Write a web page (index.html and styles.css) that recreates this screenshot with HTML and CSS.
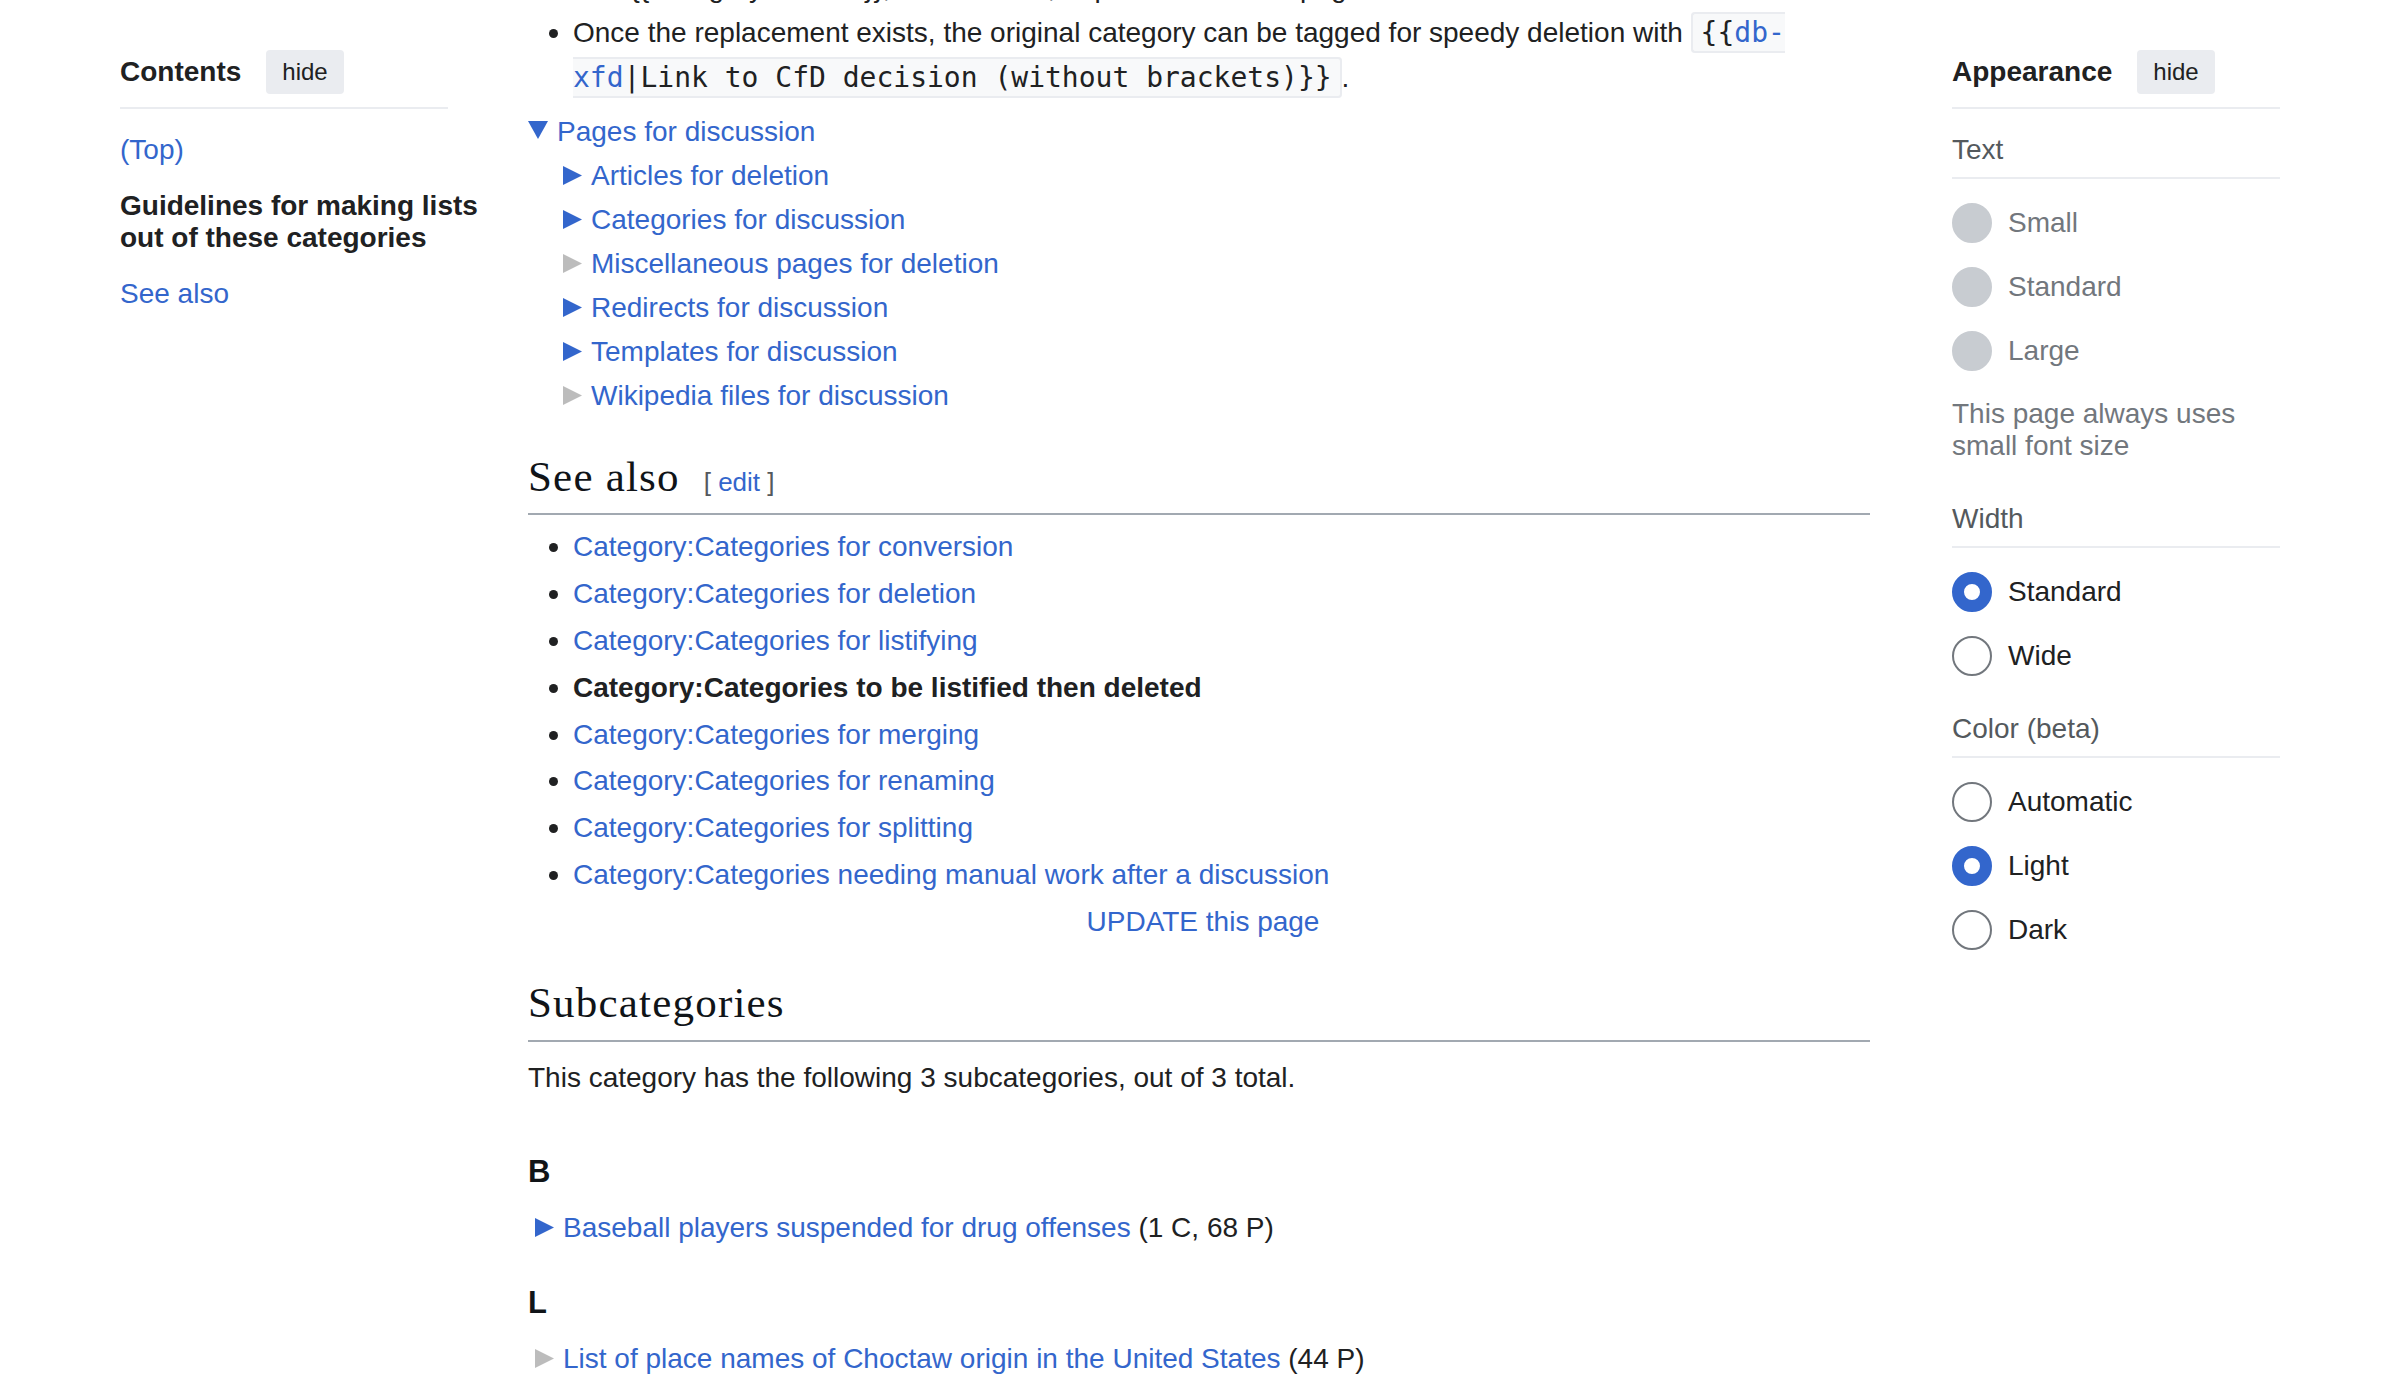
FILE: index.html
```html
<!DOCTYPE html>
<html lang="en">
<head>
<meta charset="utf-8">
<title>Category:Categories to be listified then deleted</title>
<link rel="stylesheet" href="styles.css">
</head>
<body>
<div class="page">
  <nav class="sidebar toc">
    <div class="side-head">
      <span class="side-title">Contents</span>
      <span class="hide-btn">hide</span>
    </div>
    <ul class="toc-list">
      <li><a href="#">(Top)</a></li>
      <li class="active">Guidelines for making lists out of these categories</li>
      <li><a href="#">See also</a></li>
    </ul>
  </nav>

  <main class="content">
    <ul class="bullets">
      <li>Add {{Category redirect}}, or a hatnote, to point to the new page</li>
      <li>Once the replacement exists, the original category can be tagged for speedy deletion with <code class="tpl">{{<a href="#">db-xfd</a>|Link to CfD decision (without brackets)}}</code>.</li>
    </ul>

    <div class="tree">
      <div class="ct-line"><svg class="tri tri-down" width="20" height="18" viewBox="0 0 20 18"><polygon points="0,0 20,0 10,18"/></svg><a href="#">Pages for discussion</a></div>
      <div class="ct-children">
        <div class="ct-line"><svg class="tri" width="19" height="19" viewBox="0 0 19 19"><polygon points="0,0 19,9.5 0,19"/></svg><a href="#">Articles for deletion</a></div>
        <div class="ct-line"><svg class="tri" width="19" height="19" viewBox="0 0 19 19"><polygon points="0,0 19,9.5 0,19"/></svg><a href="#">Categories for discussion</a></div>
        <div class="ct-line"><svg class="tri empty" width="19" height="19" viewBox="0 0 19 19"><polygon points="0,0 19,9.5 0,19"/></svg><a href="#">Miscellaneous pages for deletion</a></div>
        <div class="ct-line"><svg class="tri" width="19" height="19" viewBox="0 0 19 19"><polygon points="0,0 19,9.5 0,19"/></svg><a href="#">Redirects for discussion</a></div>
        <div class="ct-line"><svg class="tri" width="19" height="19" viewBox="0 0 19 19"><polygon points="0,0 19,9.5 0,19"/></svg><a href="#">Templates for discussion</a></div>
        <div class="ct-line"><svg class="tri empty" width="19" height="19" viewBox="0 0 19 19"><polygon points="0,0 19,9.5 0,19"/></svg><a href="#">Wikipedia files for discussion</a></div>
      </div>
    </div>

    <h2>See also<span class="editsection">[ <a href="#">edit</a> ]</span></h2>
    <ul class="bullets seealso">
      <li><a href="#">Category:Categories for conversion</a></li>
      <li><a href="#">Category:Categories for deletion</a></li>
      <li><a href="#">Category:Categories for listifying</a></li>
      <li><strong>Category:Categories to be listified then deleted</strong></li>
      <li><a href="#">Category:Categories for merging</a></li>
      <li><a href="#">Category:Categories for renaming</a></li>
      <li><a href="#">Category:Categories for splitting</a></li>
      <li><a href="#">Category:Categories needing manual work after a discussion</a></li>
    </ul>
    <div class="update"><a href="#">UPDATE this page</a></div>

    <h2>Subcategories</h2>
    <p>This category has the following 3 subcategories, out of 3 total.</p>

    <h3>B</h3>
    <div class="ct-row"><svg class="tri" width="19" height="19" viewBox="0 0 19 19"><polygon points="0,0 19,9.5 0,19"/></svg><a href="#">Baseball players suspended for drug offenses</a> (1 C, 68 P)</div>

    <h3>L</h3>
    <div class="ct-row"><svg class="tri empty" width="19" height="19" viewBox="0 0 19 19"><polygon points="0,0 19,9.5 0,19"/></svg><a href="#">List of place names of Choctaw origin in the United States</a> (44 P)</div>
  </main>

  <aside class="sidebar appearance">
    <div class="side-head">
      <span class="side-title">Appearance</span>
      <span class="hide-btn">hide</span>
    </div>

    <section class="app-section first">
      <div class="app-heading">Text</div>
      <div class="radios">
        <div class="radio disabled"><span class="dot"></span><span class="label">Small</span></div>
        <div class="radio disabled"><span class="dot"></span><span class="label">Standard</span></div>
        <div class="radio disabled"><span class="dot"></span><span class="label">Large</span></div>
      </div>
      <p class="note">This page always uses small font size</p>
    </section>

    <section class="app-section">
      <div class="app-heading">Width</div>
      <div class="radios">
        <div class="radio"><span class="dot checked"></span><span class="label">Standard</span></div>
        <div class="radio"><span class="dot"></span><span class="label">Wide</span></div>
      </div>
    </section>

    <section class="app-section">
      <div class="app-heading">Color (beta)</div>
      <div class="radios">
        <div class="radio"><span class="dot"></span><span class="label">Automatic</span></div>
        <div class="radio"><span class="dot checked"></span><span class="label">Light</span></div>
        <div class="radio"><span class="dot"></span><span class="label">Dark</span></div>
      </div>
    </section>
  </aside>
</div>
</body>
</html>
```

FILE: styles.css
```css
* {
  box-sizing: border-box;
}

html,
body {
  margin: 0;
  padding: 0;
  background: #ffffff;
}

body {
  font-family: "Liberation Sans", Arial, sans-serif;
  font-size: 28px;
  color: #202122;
  overflow: hidden;
}

a {
  color: #3366cc;
  text-decoration: none;
}

.page {
  display: flex;
  align-items: flex-start;
  padding-left: 120px;
  height: 1398px;
  overflow: hidden;
}

/* ---------- sidebars ---------- */
.sidebar {
  width: 328px;
  flex: none;
  padding-top: 50px;
}

.toc {
  margin-right: 80px;
}

.appearance {
  margin-left: 82px;
}

.side-head {
  display: flex;
  align-items: center;
  padding-bottom: 13px;
  border-bottom: 2px solid #eaecf0;
}

.side-title {
  font-weight: bold;
  line-height: 32px;
}

.hide-btn {
  margin-left: 25px;
  height: 44px;
  line-height: 44px;
  padding: 0 16px;
  font-size: 24px;
  background: #eaecf0;
  border-radius: 4px;
  color: #202122;
}

.toc-list {
  list-style: none;
  margin: 0;
  padding: 13px 0 0;
  width: 380px;
}

.toc-list li {
  padding: 12px 0;
  line-height: 32px;
}

.toc-list .active {
  font-weight: bold;
}

/* ---------- appearance ---------- */
.app-section {
  margin-top: 37.5px;
}

.app-section.first {
  margin-top: 25px;
}

.app-heading {
  line-height: 32px;
  padding-bottom: 10.5px;
  border-bottom: 2px solid #eaecf0;
  color: #54595d;
}

.radios {
  margin-top: 24px;
  display: flex;
  flex-direction: column;
  gap: 24px;
}

.radio {
  display: flex;
  align-items: center;
  gap: 16px;
  height: 40px;
}

.dot {
  width: 40px;
  height: 40px;
  flex: none;
  border-radius: 50%;
  border: 2px solid #72777d;
  background: #ffffff;
}

.dot.checked {
  border: 12px solid #3366cc;
}

.radio.disabled .dot {
  border-color: #c8ccd1;
  background: #c8ccd1;
}

.radio.disabled .label {
  color: #72777d;
}

.note {
  margin: 27.5px 0 0;
  padding-bottom: 3.5px;
  line-height: 32px;
  color: #72777d;
}

/* ---------- content ---------- */
.content {
  width: 1342px;
  flex: none;
  margin-top: -34px;
  line-height: 44.8px;
}

.bullets {
  list-style: none;
  margin: 0;
  padding: 0;
}

.bullets li {
  padding-left: 45px;
}

.bullets li::before {
  content: "";
  display: inline-block;
  width: 9px;
  height: 9px;
  border-radius: 50%;
  background: #202122;
  margin-left: -24px;
  margin-right: 15px;
  vertical-align: 4px;
}

.bullets.seealso {
  margin-top: 10px;
}

.bullets.seealso li {
  margin-bottom: 2px;
}

.tpl {
  font-family: "DejaVu Sans Mono", "Liberation Mono", monospace;
  font-size: 28px;
  background: #f8f9fa;
  border: 2px solid #eaecf0;
  border-radius: 4px;
  padding: 2px 8px;
  color: #202122;
}

.tree {
  margin-top: 10px;
  line-height: 44px;
}

.ct-children {
  padding-left: 35px;
}

.tri {
  display: inline-block;
  margin-right: 9px;
  fill: #3366cc;
  vertical-align: 0;
}

.tri.empty {
  fill: #bcbcbc;
}

.tri.tri-down {
  vertical-align: 2px;
}

.content h2 {
  font-family: "Liberation Serif", Georgia, "Times New Roman", serif;
  font-weight: normal;
  font-size: 43px;
  letter-spacing: 1.2px;
  line-height: 56px;
  margin: 30.5px 0 0;
  padding-bottom: 8.5px;
  border-bottom: 2px solid #a2a9b1;
  color: #101418;
}

.editsection {
  font-family: "Liberation Sans", Arial, sans-serif;
  font-size: 26px;
  letter-spacing: 0;
  line-height: 1;
  margin-left: 24px;
  color: #54595d;
}

.update {
  text-align: center;
  padding-left: 8px;
}

.content p {
  margin: 14px 0 51.4px;
}

.content h3 {
  font-size: 31px;
  font-weight: bold;
  line-height: 40px;
  margin: 31.5px 0 0;
  color: #101418;
}

.ct-row {
  margin-top: 14.6px;
  padding-left: 7px;
}
```
